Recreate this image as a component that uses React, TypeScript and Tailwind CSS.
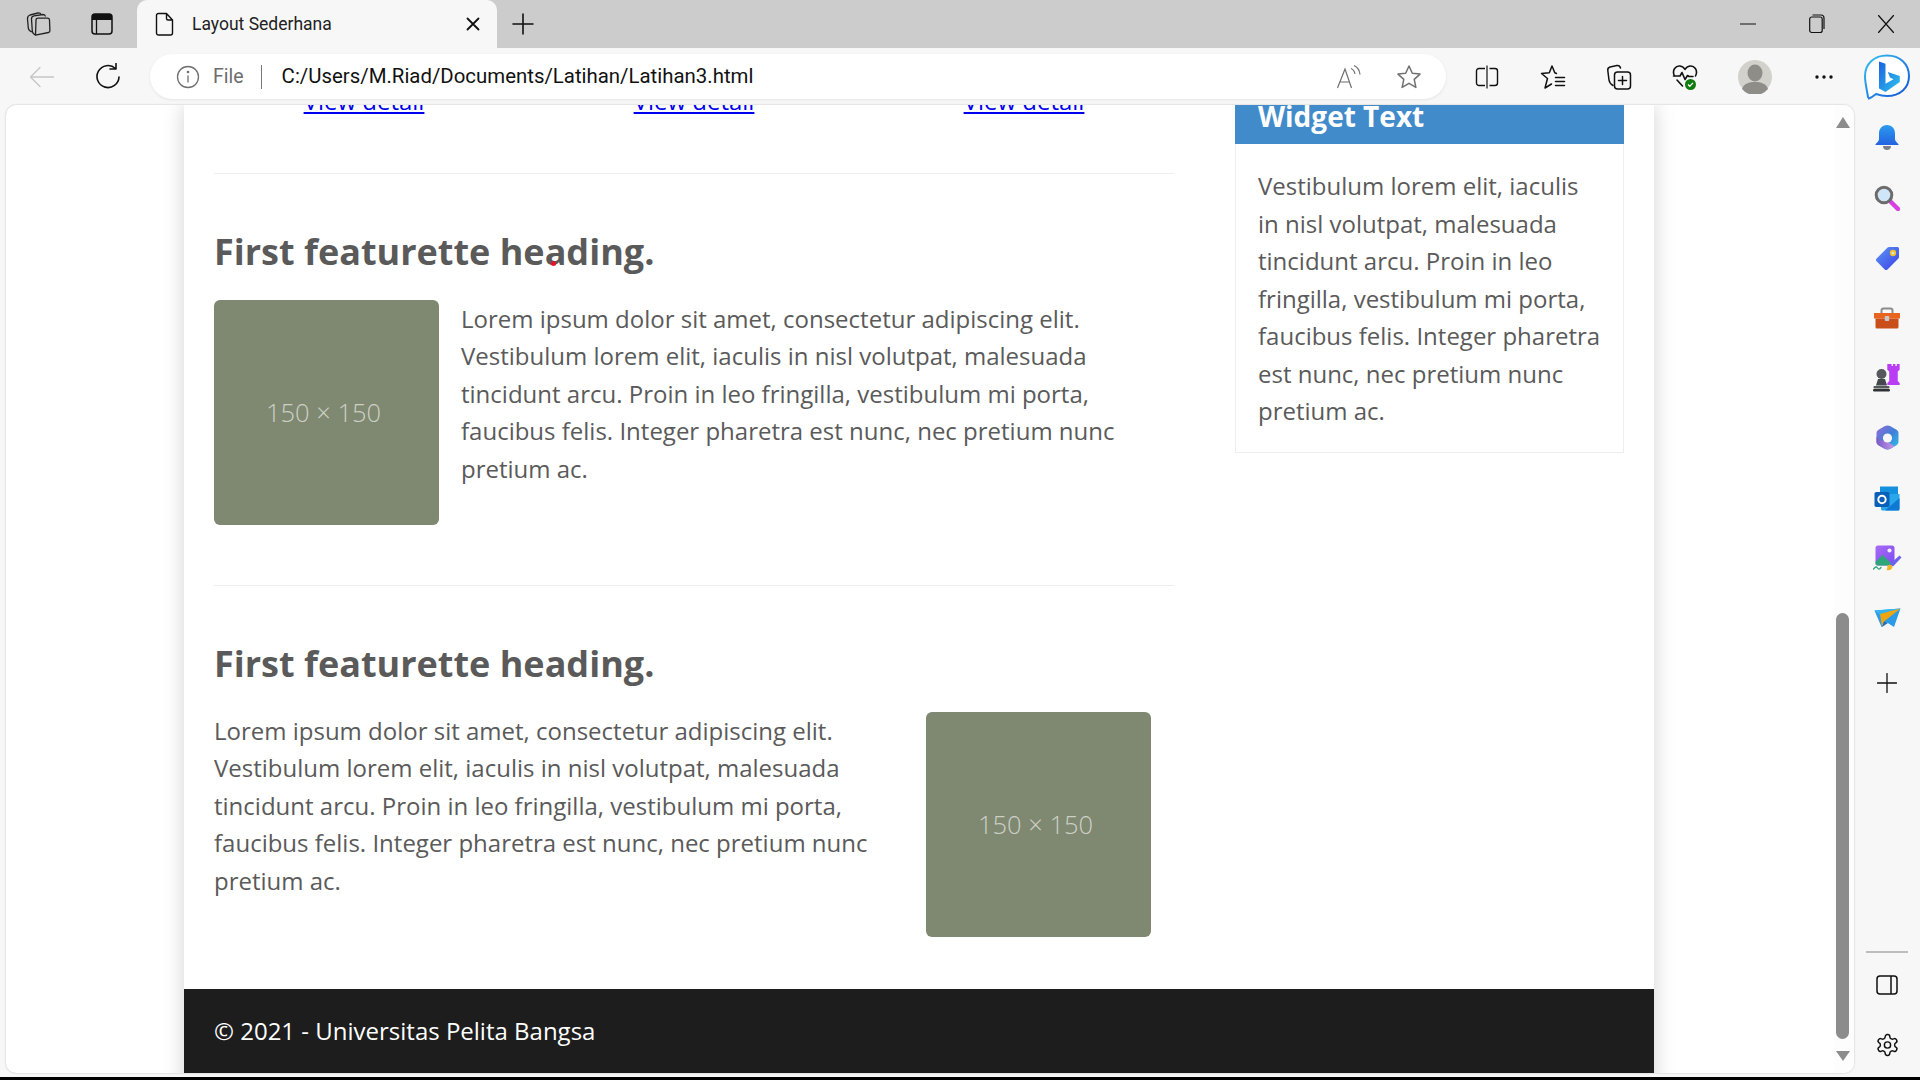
import React from "react";

const LOREM =
  "Lorem ipsum dolor sit amet, consectetur adipiscing elit. Vestibulum lorem elit, iaculis in nisl volutpat, malesuada tincidunt arcu. Proin in leo fringilla, vestibulum mi porta, faucibus felis. Integer pharetra est nunc, nec pretium nunc pretium ac.";
const WIDGET =
  "Vestibulum lorem elit, iaculis in nisl volutpat, malesuada tincidunt arcu. Proin in leo fringilla, vestibulum mi porta, faucibus felis. Integer pharetra est nunc, nec pretium nunc pretium ac.";

const OPEN = "font-['Open_Sans',sans-serif]";
const UI = "font-['Roboto',sans-serif]";

function Line({ d, w = 24, h = 24, sw = 1.4, c = "#111" }: { d: string; w?: number; h?: number; sw?: number; c?: string }) {
  return (
    <svg width={w} height={h} viewBox={`0 0 ${w} ${h}`} fill="none" stroke={c} strokeWidth={sw} strokeLinecap="round" strokeLinejoin="round">
      <path d={d} />
    </svg>
  );
}

function Placeholder() {
  return (
    <div className={`w-[225px] h-[225px] shrink-0 rounded-[6px] bg-[#7f8871] flex items-center justify-center pr-[6px] pt-[1px] text-[25.5px] font-light text-[#cdd0c5] ${OPEN}`}>
      150 × 150
    </div>
  );
}

function Bell() {
  return (
    <svg width="24" height="26" viewBox="0 0 24 26">
      <defs>
        <linearGradient id="bell" x1="0" y1="0" x2="0" y2="1">
          <stop offset="0" stopColor="#2a9bf0" />
          <stop offset="1" stopColor="#2563e0" />
        </linearGradient>
      </defs>
      <path d="M12 0c5 0 8 3.600 8 8.500V14c0 2 2 3.500 3.500 5.200V20H.5v-.8C2 17.500 4 16 4 14V8.500C4 3.600 7 0 12 0z" fill="url(#bell)" />
      <path d="M8 21h8c0 2.500-1.600 4-4 4s-4-1.500-4-4z" fill="#7a7f88" />
    </svg>
  );
}
function Search() {
  return (
    <svg width="26" height="26" viewBox="0 0 26 26">
      <path d="M15 15l9 9" stroke="#d63fe0" strokeWidth="4.500" strokeLinecap="round" />
      <circle cx="10" cy="10" r="7.800" fill="#cfe6f8" stroke="#6c6c6c" strokeWidth="3" />
    </svg>
  );
}
function Tag() {
  return (
    <svg width="25" height="25" viewBox="0 0 25 25">
      <defs>
        <linearGradient id="tag" x1="0" y1="0" x2="1" y2="1">
          <stop offset="0" stopColor="#5d97f5" />
          <stop offset="1" stopColor="#3a3fe6" />
        </linearGradient>
      </defs>
      <path d="M14 1h8.500A1.500 1.500 0 0 1 24 2.500V11a2 2 0 0 1-.6 1.400L12.500 23.400a2 2 0 0 1-2.800 0L1.600 15.300a2 2 0 0 1 0-2.800L12.600 1.600A2 2 0 0 1 14 1z" fill="url(#tag)" />
      <circle cx="18" cy="7" r="2.400" fill="#d9dde8" stroke="#f3c316" strokeWidth="1.600" />
    </svg>
  );
}
function Toolbox() {
  return (
    <svg width="28" height="22" viewBox="0 0 28 22">
      <path d="M8.500 6V3.500A2 2 0 0 1 10.500 1.500h7a2 2 0 0 1 2 2V6" fill="none" stroke="#8c8c8c" strokeWidth="2" />
      <path d="M1 6h26v5.500H1z" fill="#e8641f" />
      <path d="M2.500 11.500h23V20a1.500 1.500 0 0 1-1.500 1.500H4A1.500 1.500 0 0 1 2.500 20z" fill="#c94e1a" />
      <rect x="11.800" y="9" width="4.400" height="5" rx="0.800" fill="#c9c9c9" />
    </svg>
  );
}
function Chess() {
  return (
    <svg width="28" height="28" viewBox="0 0 28 28">
      <path d="M16 0h2.500v2H20V0h2.500v2H24V0h3v6l-2 2v10l2 2v2H14v-2l2-2V8l-2-2V0z" transform="translate(1 0) scale(0.95)" fill="#b93df5" />
      <circle cx="8.500" cy="10" r="5" fill="#55585c" />
      <path d="M5 15h7l2 6.500H3z" fill="#44474b" />
      <rect x="0.500" y="22" width="16" height="2.500" rx="1" fill="#55585c" />
      <rect x="0" y="25" width="17" height="2.500" rx="1.200" fill="#2f3134" />
    </svg>
  );
}
function M365() {
  return (
    <svg width="25" height="26" viewBox="0 0 25 26">
      <defs>
        <linearGradient id="m1" x1="0" y1="0" x2="1" y2="1">
          <stop offset="0" stopColor="#9a6bd8" />
          <stop offset="0.500" stopColor="#3f7fd8" />
          <stop offset="1" stopColor="#33c1e8" />
        </linearGradient>
        <linearGradient id="m2" x1="0" y1="0" x2="1" y2="0">
          <stop offset="0" stopColor="#7a59c9" />
          <stop offset="1" stopColor="#c79ae6" />
        </linearGradient>
      </defs>
      <path d="M12.500.5c1 0 2 .3 3 .8l6 3.400c1.300.8 2 2 2 3.500v8.600c0 1.500-.7 2.700-2 3.500l-6 3.400c-2 1-4 1-6 0l-6-3.400c-1.300-.8-2-2-2-3.500V8.200c0-1.500.7-2.700 2-3.500l6-3.400c1-.5 2-.8 3-.8z" fill="url(#m1)" />
      <path d="M1.500 12v4.800c0 1.500.7 2.700 2 3.500l6 3.400c2 1 4 1 6 0l4-2.200-7-5-6-1z" fill="url(#m2)" />
      <circle cx="12.500" cy="13" r="4.600" fill="#f7f7f7" />
    </svg>
  );
}
function Outlook() {
  return (
    <svg width="26" height="25" viewBox="0 0 26 25">
      <rect x="6" y="0.500" width="18" height="12" fill="#1490df" />
      <path d="M12 8h13.500v15a1.500 1.500 0 0 1-1.500 1.500H8.500A1.500 1.500 0 0 1 7 23V14z" fill="#28a8ea" />
      <path d="M25.500 12v11a1.500 1.500 0 0 1-1.500 1.500H11z" fill="#0f78d4" />
      <rect x="0.500" y="6" width="15" height="15" rx="1.800" fill="#0a5fb8" />
      <circle cx="8" cy="13.500" r="3.700" fill="none" stroke="#fff" strokeWidth="2" />
    </svg>
  );
}
function Designer() {
  return (
    <svg width="29" height="27" viewBox="0 0 29 27">
      <defs>
        <linearGradient id="d1" x1="0" y1="0" x2="1" y2="1">
          <stop offset="0" stopColor="#a86bf5" />
          <stop offset="1" stopColor="#7a4df0" />
        </linearGradient>
      </defs>
      <rect x="2.500" y="0.500" width="19" height="20" rx="2.500" fill="url(#d1)" />
      <circle cx="16.500" cy="5.500" r="2.100" fill="#f2ecff" />
      <path d="M2.500 17l7-7 10 9.500-1.500 1H5a2.500 2.500 0 0 1-2.500-2.500z" fill="#2fa67a" />
      <path d="M17 19L26.500 10.500 28.500 12.500 20 21.500z" fill="#6a63f0" />
      <path d="M14.500 20.500c2-1.500 4.500-.8 5 1.500-.5 2.500-3 4-6 3 1.200-1.200.6-3 1-4.500z" fill="#f0b429" />
      <path d="M.5 24c2-2.500 3-2.500 4-1s2 1.500 3.500-.5" fill="none" stroke="#2fa67a" strokeWidth="1.300" strokeLinecap="round" />
    </svg>
  );
}
function Send() {
  return (
    <svg width="27" height="20" viewBox="0 0 27 20">
      <path d="M.5 2.500L26.500.5 20 19 13 14.500 7.500 19z" fill="#2b9be8" />
      <path d="M.5 2.500L26.500.5 8 8.500z" fill="#33b3f0" />
      <path d="M6 6L8 19l2-5.500L26.500.5z" fill="#f0a40f" />
      <path d="M8 19l2-5.500 4 1.500z" fill="#1b6fc4" />
    </svg>
  );
}

function BingLogo() {
  return (
    <svg width="46" height="46" viewBox="0 0 46 46">
      <defs>
        <linearGradient id="bo" x1="0" y1="0" x2="1" y2="1">
          <stop offset="0" stopColor="#35c1f1" />
          <stop offset="1" stopColor="#1450d8" />
        </linearGradient>
        <linearGradient id="bb" x1="0" y1="0" x2="1" y2="1">
          <stop offset="0" stopColor="#1b62e0" />
          <stop offset="1" stopColor="#2fc4ee" />
        </linearGradient>
      </defs>
      <path d="M23 1.500C10 1.500 1 10 1 22c0 7 2 14 3 21l1 1.500c3-1 5-3 7-4.500 3 1 7 2 11 2 13 0 22-8 22-20S36 1.500 23 1.500z" fill="#fff" stroke="url(#bo)" strokeWidth="2" />
      <path d="M15 7.500l6.500 2.300v20l8-4.500-3.500-1.700-2.200-5.500 12 4v6L21.500 38 15 34.500z" fill="url(#bb)" />
    </svg>
  );
}

export default function App() {
  return (
    <div className="w-[1920px] h-[1080px] overflow-hidden flex flex-col bg-[#f7f7f7]">
      {/* Tab strip */}
      <div className="h-[48px] shrink-0 flex bg-[#cccccc]">
        <div className="w-[78px] flex items-center justify-center">
          <svg width="26" height="24" viewBox="0 0 26 24" fill="none" stroke="#222" strokeWidth="1.300" strokeLinejoin="round">
            <path d="M9.500 23.200L22.500 20.500a1.800 1.800 0 0 0 1.400-1.800L23.500 8a2 2 0 0 0-2-1.800H12a2 2 0 0 0-2 2z" />
            <path d="M9.500 23c-2-.8-3-2-3.200-4L5.500 7C5.400 5 6.500 4 8 3.800L17 2.500c1.500 0 2.300.8 2.500 2" />
            <path d="M6 20C3.500 19 2.500 18 2.300 16L1.500 7C1.400 4.500 2.500 3.500 4 3L12 1c1.500-.3 2.500.2 3 1.500" />
          </svg>
        </div>
        <div className="w-[48px] flex items-center justify-center">
          <svg width="22" height="22" viewBox="0 0 22 22">
            <rect x="1" y="1" width="20" height="20" rx="3" fill="none" stroke="#111" strokeWidth="1.500" />
            <path d="M1 4a3 3 0 0 1 3-3h14a3 3 0 0 1 3 3v3H1z" fill="#111" />
            <path d="M5.500 7v14" stroke="#111" strokeWidth="1.300" />
          </svg>
        </div>
        <div className={`ml-[11px] w-[360px] h-[48px] flex items-center bg-[#f7f7f7] rounded-t-[10px] ${UI}`}>
          <div className="w-[55px] flex justify-center pl-[1px]">
            <Line w={20} h={24} sw={1.400} d="M3.500 1.500h8l6 6.500v13a2 2 0 0 1-2 2h-12a2 2 0 0 1-2-2v-17.500a2 2 0 0 1 2-2zM11.500 1.500v5a1.500 1.500 0 0 0 1.500 1.500h4.500" />
          </div>
          <span className="text-[17.5px] text-[#222] whitespace-nowrap">Layout Sederhana</span>
          <div className="ml-auto w-[48px] flex justify-center">
            <Line w={14} h={14} sw={1.800} d="M1.500 1.500l11 11M12.500 1.500l-11 11" />
          </div>
        </div>
        <div className="w-[52px] flex items-center justify-center">
          <Line w={22} h={22} sw={1.600} d="M11 1v20M1 11h20" />
        </div>
        <div className="flex-1" />
        <div className="w-[69px] flex items-center justify-center">
          <Line w={16} h={2} sw={1.200} d="M0 1h16" />
        </div>
        <div className="w-[69px] flex items-center justify-center">
          <svg width="16" height="20" viewBox="0 0 16 20" fill="none" stroke="#111" strokeWidth="1.200">
            <rect x="0.700" y="3" width="12.500" height="15.500" rx="2" />
            <path d="M3.500 1h8.500a3 3 0 0 1 3 3v11" />
          </svg>
        </div>
        <div className="w-[69px] flex items-center justify-center">
          <Line w={16} h={18} sw={1.200} d="M.5.5l15 17M15.500.5l-15 17" />
        </div>
      </div>

      {/* Toolbar */}
      <div className="h-[57px] shrink-0 flex items-center pl-[18px]">
        <div className="w-[48px] flex justify-center">
          <Line w={26} h={24} sw={1.300} c="#c6c6c6" d="M1.500 12h23M11 2.500L1.500 12l9.500 9.500" />
        </div>
        <div className="ml-[18px] w-[48px] flex justify-center">
          <Line w={26} h={28} sw={1.600} d="M20.500 5.500A11 11 0 1 0 24 14M21 .5v5.500h-6" />
        </div>
        <div className={`ml-[18px] w-[1296px] h-[45px] rounded-full bg-white shadow-[0_1px_3px_rgba(0,0,0,0.08)] flex items-center ${UI}`}>
          <div className="ml-[26px] w-[24px] flex justify-center">
            <svg width="24" height="24" viewBox="0 0 24 24" fill="none" stroke="#707070" strokeWidth="1.300">
              <circle cx="12" cy="12" r="10.500" />
              <path d="M12 10.500v7" />
              <circle cx="12" cy="7" r="0.700" fill="#707070" />
            </svg>
          </div>
          <span className="ml-[13px] text-[19.5px] text-[#6d6d6d]">File</span>
          <span className="ml-[17px] w-[1px] h-[24px] bg-[#777]" />
          <span className="ml-[20px] text-[20.4px] text-[#111] whitespace-nowrap">C:/Users/M.Riad/Documents/Latihan/Latihan3.html</span>
          <div className="ml-auto flex items-center pr-[24px] gap-[34px]">
            <svg width="26" height="26" viewBox="0 0 26 26" fill="none" stroke="#707070" strokeWidth="1.200">
              <path d="M1.500 24L9 5l6.500 19M4 18h9.500" />
              <path d="M15 4.500c2.500 1 3.500 3 4 5.500M18 1.500c3.500 1.500 5.500 5 6 9" />
            </svg>
            <Line w={26} h={26} sw={1.500} c="#707070" d="M13 2l3.300 7.300 7.700.8-5.800 5.300 1.700 8L13 19.300l-6.900 4.100 1.700-8L2 10.100l7.700-.8z" />
          </div>
        </div>
        <div className="ml-[8px] flex items-center">
          <div className="w-[66px] flex justify-center">
            <svg width="24" height="26" viewBox="0 0 24 26" fill="none" stroke="#111" strokeWidth="1.400">
              <path d="M10 4.500H4A2.500 2.500 0 0 0 1.500 7v12A2.500 2.500 0 0 0 4 21.500h6M14.500 4.500H20A2.500 2.500 0 0 1 22.500 7v12a2.500 2.500 0 0 1-2.500 2.500h-5.500" />
              <path d="M12 1.500v23" stroke="#333" />
            </svg>
          </div>
          <div className="w-[66px] flex justify-center">
            <svg width="26" height="26" viewBox="0 0 26 26" fill="none" stroke="#111" strokeWidth="1.500" strokeLinejoin="round" strokeLinecap="round">
              <path d="M16.500 9.500L14.800 8.800 12 2 9.300 8.800 1.500 9.500 7.500 14.500 5 24l6.500-4" />
              <path d="M15.500 13.500h9M15.500 17.500h9M15.500 21.500h9" />
            </svg>
          </div>
          <div className="w-[66px] flex justify-center">
            <svg width="26" height="28" viewBox="0 0 26 28" fill="none" stroke="#111" strokeWidth="1.500" strokeLinejoin="round" strokeLinecap="round">
              <path d="M7 22.500C4 21 3.500 20 3 17L1.800 7.500C1.500 5.500 2.500 4.500 4 4l7-1.500c2-.3 3 .5 3.500 2.500" />
              <rect x="8.500" y="9" width="16" height="17" rx="3" />
              <path d="M16.500 13.500v8M12.500 17.500h8" />
            </svg>
          </div>
          <div className="w-[66px] flex justify-center">
            <svg width="26" height="28" viewBox="0 0 26 28">
              <path d="M2.500 13C-.5 7 4 2.500 8 3c2.500.3 4 1.500 5 3.500C14 4.500 15.500 3.300 18 3c4-.5 8.500 4 5.500 10M1.500 13h6.500l2-3.500 3 7 2.500-4 1.500 1H21M5 17l5.500 6" fill="none" stroke="#111" strokeWidth="1.600" strokeLinecap="round" strokeLinejoin="round" />
              <circle cx="18.500" cy="21.500" r="5.500" fill="#107c10" />
              <path d="M16 21.500l1.800 1.800 3.200-3.400" fill="none" stroke="#fff" strokeWidth="1.300" />
            </svg>
          </div>
          <div className="w-[74px] flex justify-center">
            <svg width="34" height="34" viewBox="0 0 34 34">
              <circle cx="17" cy="17" r="17" fill="#d2d1cc" />
              <ellipse cx="17" cy="13" rx="7.500" ry="8.500" fill="#8f8d88" />
              <path d="M4 29c2-5.500 7-7 13-7s11 1.500 13 7a17 17 0 0 1-26 0z" fill="#8f8d88" />
            </svg>
          </div>
          <div className="w-[62px] flex justify-center pl-[2px]">
            <svg width="20" height="6" viewBox="0 0 20 6" fill="#111">
              <circle cx="3" cy="3" r="1.700" />
              <circle cx="10" cy="3" r="1.700" />
              <circle cx="17" cy="3" r="1.700" />
            </svg>
          </div>
          <div className="w-[66px] flex justify-center">
            <BingLogo />
          </div>
        </div>
      </div>

      {/* Body */}
      <div className="h-[972px] shrink-0 flex">
        <div className="ml-[6px] w-[1848px] h-[968px] bg-white rounded-[10px] overflow-hidden flex shadow-[0_0_2px_rgba(0,0,0,0.25)]">
          <div className="w-[1828px] h-full overflow-hidden">
            <div className="ml-[178px] w-[1470px] h-[2000px] bg-white shadow-[0_0_20px_rgba(0,0,0,0.18)] flex flex-col">
              <div className="flex h-[884px] shrink-0 overflow-hidden">
                {/* Main column */}
                <div className={`relative w-[990px] ml-[15px] shrink-0 -mt-[23px] text-[24px] leading-[37.5px] text-[#5a5a5a] ${OPEN}`}>
                  <div className="grid grid-cols-3 text-center">
                    <a className="text-[#0000ee] underline">View detail</a>
                    <a className="text-[#0000ee] underline">View detail</a>
                    <a className="text-[#0000ee] underline">View detail</a>
                  </div>
                  <div className="mx-[15px] mt-[53px] border-t border-[#eeeeee]" />
                  <div className="mx-[15px] pt-[58px] pb-[60px]">
                    <h2 className="relative text-[36px] leading-[40px] font-bold mb-[28px]">
                      First featurette heading.
                      <span className="absolute left-[337px] top-[29px] w-[5px] h-[5px] rounded-full bg-[#e8132a]" />
                    </h2>
                    <div className="flex">
                      <Placeholder />
                      <p className="ml-[22px] pr-[30px]">{LOREM}</p>
                    </div>
                  </div>
                  <div className="mx-[15px] border-t border-[#eeeeee]" />
                  <div className="mx-[15px] pt-[58px]">
                    <h2 className="text-[36px] leading-[40px] font-bold mb-[28px]">First featurette heading.</h2>
                    <div className="flex items-start">
                      <p className="w-[665px] shrink-0">{LOREM}</p>
                      <div className="ml-[47px]">
                        <Placeholder />
                      </div>
                    </div>
                  </div>
                </div>
                {/* Widget column */}
                <div className={`ml-[46px] w-[389px] shrink-0 -mt-[24px] ${OPEN}`}>
                  <div className="border border-[#eeeeee] border-t-0">
                    <div className="-mx-[1px] h-[63px] bg-[#428bca] pt-[15px] pl-[23px] text-[28px] leading-[40px] font-bold text-white">
                      Widget Text
                    </div>
                    <p className="pl-[22px] pr-[20px] pt-[23px] pb-[22px] text-[24px] leading-[37.5px] text-[#5a5a5a]">{WIDGET}</p>
                  </div>
                </div>
              </div>
              <div className={`h-[84px] shrink-0 bg-[#1d1d1d] flex items-center pl-[30px] text-[24px] text-white ${OPEN}`}>
                © 2021 - Universitas Pelita Bangsa
              </div>
            </div>
          </div>
          {/* Scrollbar */}
          <div className="w-[20px] h-full flex flex-col items-center bg-[#fdfdfd] pr-[3px]">
            <svg className="mt-[12px] shrink-0" width="14" height="11" viewBox="0 0 14 11">
              <path d="M7 0l7 11H0z" fill="#8c8c8c" />
            </svg>
            <div className="mt-auto w-[13px] h-[426px] rounded-full bg-[#8c8c8c]" />
            <svg className="mt-[12px] mb-[12px] shrink-0" width="14" height="10" viewBox="0 0 14 10">
              <path d="M7 10L14 0H0z" fill="#8c8c8c" />
            </svg>
          </div>
        </div>
        {/* Edge sidebar */}
        <div className="w-[66px] h-full flex flex-col items-center pt-[3px] pb-[2px]">
          {[<Bell key="a" />, <Search key="b" />, <Tag key="c" />, <Toolbox key="d" />, <Chess key="e" />, <M365 key="f" />, <Outlook key="g" />, <Designer key="h" />, <Send key="i" />].map((icon, i) => (
            <div key={i} className="w-[66px] h-[60px] flex items-center justify-center">
              {icon}
            </div>
          ))}
          <div className="mt-[5px] w-[66px] h-[60px] flex items-center justify-center">
            <Line w={20} h={20} sw={1.300} d="M10 .5v19M.5 10h19" />
          </div>
          <div className="mt-auto w-[42px] h-[2px] bg-[#bdbdbd] mb-[2px]" />
          <div className="w-[66px] h-[60px] flex items-center justify-center">
            <svg width="22" height="20" viewBox="0 0 22 20" fill="none" stroke="#111" strokeWidth="1.500">
              <rect x="1" y="1" width="20" height="18" rx="3" />
              <path d="M15 1v18" />
            </svg>
          </div>
          <div className="w-[66px] h-[60px] flex items-center justify-center">
            <svg width="25" height="26" viewBox="0 0 24 24" fill="none" stroke="#111" strokeWidth="1.400" strokeLinejoin="round">
              <path d="M12.220 2h-.44a2 2 0 0 0-2 2v.18a2 2 0 0 1-1 1.730l-.43.250a2 2 0 0 1-2 0l-.15-.08a2 2 0 0 0-2.730.730l-.22.380a2 2 0 0 0 .730 2.730l.15.100a2 2 0 0 1 1 1.720v.510a2 2 0 0 1-1 1.740l-.15.090a2 2 0 0 0-.730 2.730l.22.380a2 2 0 0 0 2.730.730l.15-.08a2 2 0 0 1 2 0l.43.250a2 2 0 0 1 1 1.730V20a2 2 0 0 0 2 2h.44a2 2 0 0 0 2-2v-.18a2 2 0 0 1 1-1.730l.43-.250a2 2 0 0 1 2 0l.15.080a2 2 0 0 0 2.730-.730l.22-.390a2 2 0 0 0-.730-2.730l-.15-.080a2 2 0 0 1-1-1.740v-.500a2 2 0 0 1 1-1.740l.15-.090a2 2 0 0 0 .730-2.730l-.22-.380a2 2 0 0 0-2.730-.730l-.15.080a2 2 0 0 1-2 0l-.43-.250a2 2 0 0 1-1-1.730V4a2 2 0 0 0-2-2z" />
              <circle cx="12" cy="12" r="3" />
            </svg>
          </div>
        </div>
      </div>
      <div className="flex-1 bg-black" />
    </div>
  );
}
